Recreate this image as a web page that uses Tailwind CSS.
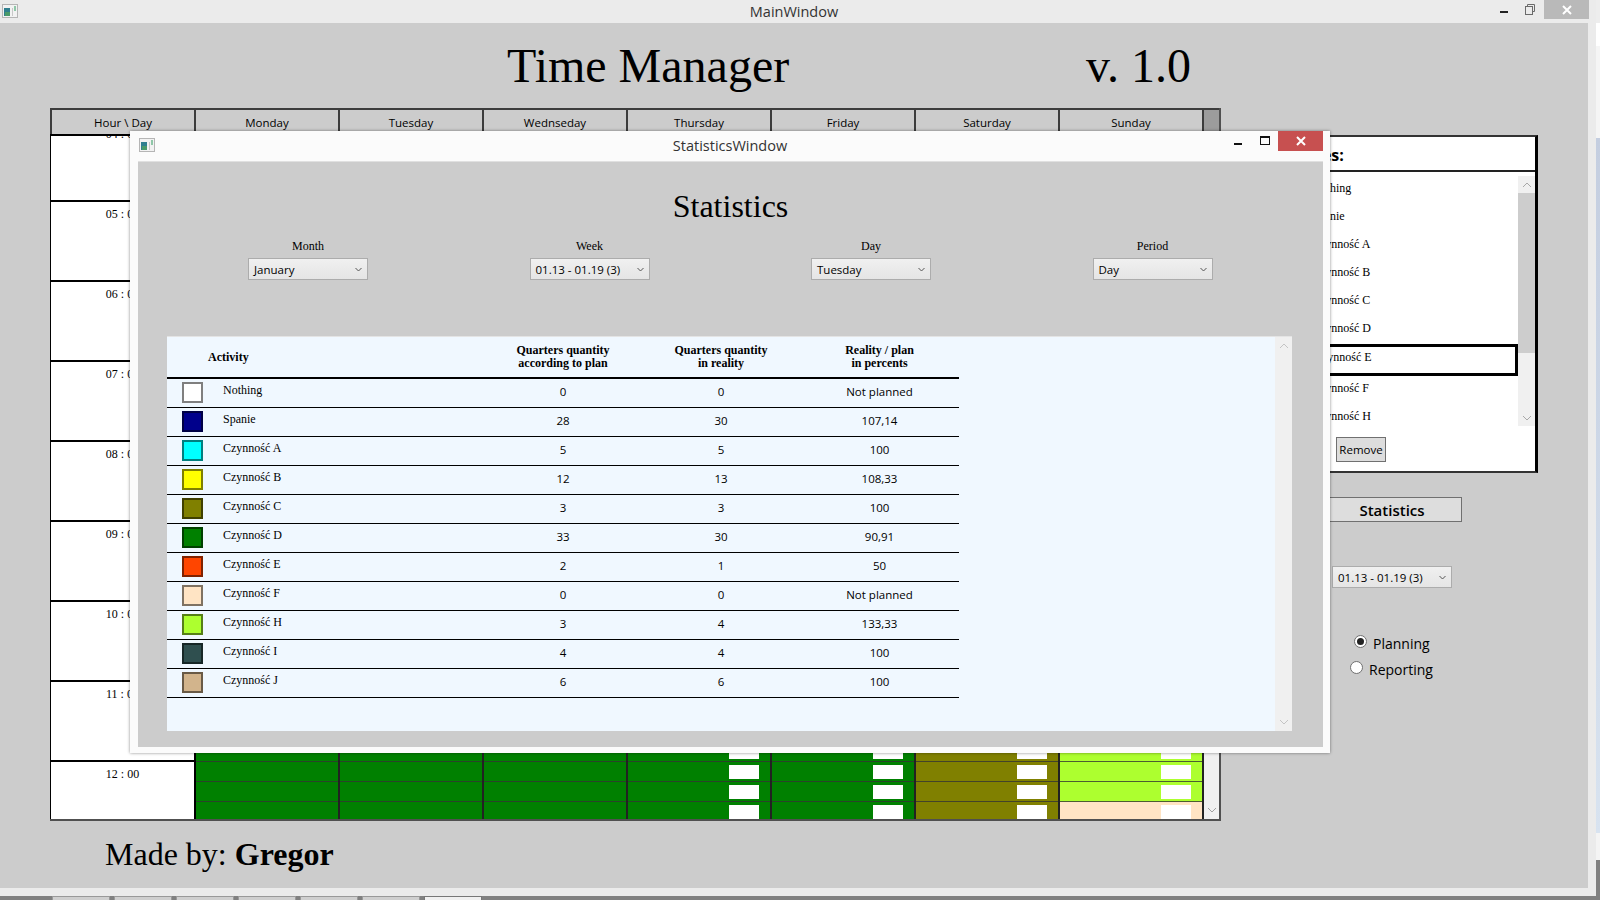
<!DOCTYPE html>
<html lang="en">
<head>
  <meta charset="UTF-8" />
  <title>Time Manager</title>
  <script src="https://cdn.jsdelivr.net/npm/@tailwindcss/browser@4"></script>
</head>
<body class="relative w-[1600px] h-[900px] overflow-hidden bg-[#808080] font-['Open_Sans',sans-serif] text-black">

  <!-- strip of the desktop behind the main window -->
  <div class="absolute right-0 top-0 w-[4px] h-[860px] flex flex-col">
    <div class="h-[23px] bg-[#ededed]"></div>
    <div class="h-[23px] bg-white"></div>
    <div class="h-[92px] bg-[#f5f5f5]"></div>
    <div class="h-[695px] bg-gradient-to-b from-[#c4cee0] to-[#d8e3f0]"></div>
    <div class="h-[27px] bg-[#f4f4f4]"></div>
  </div>
  <!-- taskbar previews -->
  <div class="absolute left-[52px] top-[896px] flex gap-[4px]">
    <div class="w-[58px] h-[4px] bg-[#cfcfcf] border border-b-0 border-[#999]"></div>
    <div class="w-[58px] h-[4px] bg-[#cfcfcf] border border-b-0 border-[#999]"></div>
    <div class="w-[58px] h-[4px] bg-[#cfcfcf] border border-b-0 border-[#999]"></div>
    <div class="w-[58px] h-[4px] bg-[#cfcfcf] border border-b-0 border-[#999]"></div>
    <div class="w-[58px] h-[4px] bg-[#cfcfcf] border border-b-0 border-[#999]"></div>
    <div class="w-[58px] h-[4px] bg-[#cfcfcf] border border-b-0 border-[#999]"></div>
    <div class="w-[58px] h-[4px] bg-[#f0f0f0] border border-b-0 border-[#777]"></div>
  </div>

  <!-- MAIN WINDOW -->
  <div class="absolute left-0 top-0 w-[1596px] h-[896px] bg-[#ebebeb] flex flex-col">
    <div class="relative h-[23px] shrink-0 flex items-center justify-center text-[14.5px] text-[#333]">
      <svg class="absolute left-[2px] top-[3px]" width="16" height="16" viewBox="0 0 16 16">
        <rect x="0.5" y="1.5" width="15" height="13" fill="#f2f2f2" stroke="#b5b5b5"/>
        <rect x="2" y="5" width="6" height="8" fill="#2f7f8f"/>
        <rect x="3" y="9" width="5" height="4" fill="#4a9a6a"/>
        <rect x="10" y="5" width="1" height="8" fill="#c8c8c8"/>
        <rect x="12" y="3" width="2" height="5" fill="#8fc7a8"/>
      </svg>
      <span class="ml-[-8px]">MainWindow</span>
      <div class="absolute left-[1500px] top-[11px] w-[8px] h-[2px] bg-[#222]"></div>
      <svg class="absolute left-[1524px] top-[4px]" width="11" height="11" viewBox="0 0 11 11" fill="none" stroke="#6a6a6a">
        <path d="M3.5 2.5V.5h7v7h-2"/><rect x="1.5" y="2.5" width="7" height="8"/>
      </svg>
      <div class="absolute left-[1544px] top-0 w-[45px] h-[19px] bg-[#b9b9b9] flex items-center justify-center">
        <svg width="10" height="10" viewBox="0 0 10 10" stroke="#fff" stroke-width="2"><path d="M1 1l8 8M9 1l-8 8"/></svg>
      </div>
    </div>

    <div class="relative w-[1588px] h-[865px] bg-[#cccccc]">
      <div class="absolute left-[507px] top-[16px] text-[48px] leading-[54px] font-['Liberation_Serif',serif]">Time Manager</div>
      <div class="absolute left-[1086px] top-[16px] text-[48px] leading-[54px] font-['Liberation_Serif',serif]">v. 1.0</div>

      <!-- weekly timetable -->
      <div class="absolute left-[50px] top-[85px] w-[1171px] h-[713px] flex flex-col border-b-2 border-r-2 border-[#505050]">
        <div class="flex h-[28px] shrink-0 border-b-2 border-black text-[11.5px] leading-[16px]">
          <div class="w-[146px] pt-[5px] text-center border-t-2 border-x-2 border-[#3c3c3c]">Hour \ Day</div>
          <div class="w-[144px] pt-[5px] text-center border-t-2 border-r-2 border-[#3c3c3c]">Monday</div>
          <div class="w-[144px] pt-[5px] text-center border-t-2 border-r-2 border-[#3c3c3c]">Tuesday</div>
          <div class="w-[144px] pt-[5px] text-center border-t-2 border-r-2 border-[#3c3c3c]">Wednseday</div>
          <div class="w-[144px] pt-[5px] text-center border-t-2 border-r-2 border-[#3c3c3c]">Thursday</div>
          <div class="w-[144px] pt-[5px] text-center border-t-2 border-r-2 border-[#3c3c3c]">Friday</div>
          <div class="w-[144px] pt-[5px] text-center border-t-2 border-r-2 border-[#3c3c3c]">Saturday</div>
          <div class="w-[144px] pt-[5px] text-center border-t-2 border-r-2 border-[#3c3c3c]">Sunday</div>
          <div class="flex-1 bg-[#9c9c9c] border-t-2 border-[#3c3c3c]"></div>
        </div>
        <div class="relative flex-1 overflow-hidden flex">
          <div id="rows" class="w-[1154px] mt-[-14px] font-['Liberation_Serif',serif] text-[12px] leading-[14px]"></div>
          <div class="flex-1 bg-[#f0f0f0] flex items-end justify-center pb-[6px]">
            <svg width="10" height="6" viewBox="0 0 10 6" fill="none" stroke="#a0a0a0"><path d="M1 1l4 4 4-4"/></svg>
          </div>
        </div>
      </div>

      <div class="absolute left-[105px] top-[813px] text-[32px] leading-[36px] font-['Liberation_Serif',serif]">Made by: <b>Gregor</b></div>

      <!-- activities panel -->
      <div class="absolute left-[1180px] top-[112px] w-[358px] h-[338px] bg-white border-t-2 border-b-2 border-[#333] border-r-[3px] border-r-black flex flex-col">
        <div class="h-[35px] shrink-0 border-b-2 border-[#222] pl-[85px] pt-[7px] text-[16px] leading-[22px] font-bold">Activities:</div>
        <div class="flex flex-1">
          <div class="w-[338px] pt-[4px] font-['Liberation_Serif',serif] text-[12px] leading-[14px]">
            <div class="h-[28px] pl-[132px] pt-[5px]">Nothing</div>
            <div class="h-[28px] pl-[132px] pt-[5px]">Spanie</div>
            <div class="h-[28px] pl-[132px] pt-[5px]">Czynność A</div>
            <div class="h-[28px] pl-[132px] pt-[5px]">Czynność B</div>
            <div class="h-[28px] pl-[132px] pt-[5px]">Czynność C</div>
            <div class="h-[28px] pl-[132px] pt-[5px]">Czynność D</div>
            <div class="h-[32px] pl-[130px] pt-[3px] border-[3px] border-black ml-[1px]">Czynność E</div>
            <div class="h-[28px] pl-[132px] pt-[5px]">Czynność F</div>
            <div class="h-[28px] pl-[132px] pt-[5px]">Czynność H</div>
            <div class="flex justify-end pr-[132px] pt-[5px]">
              <button class="w-[50px] h-[25px] bg-[#dddddd] border border-[#707070] font-['Open_Sans',sans-serif] text-[11.5px]">Remove</button>
            </div>
          </div>
          <div class="w-[17px] h-[250px] mt-[4px] flex flex-col bg-[#f0f0f0]">
            <div class="h-[17px] flex items-center justify-center">
              <svg width="10" height="6" viewBox="0 0 10 6" fill="none" stroke="#a8a8a8"><path d="M1 5l4-4 4 4"/></svg>
            </div>
            <div class="h-[160px] bg-[#cdcdcd]"></div>
            <div class="flex-1 flex items-end justify-center pb-[5px]">
              <svg width="10" height="6" viewBox="0 0 10 6" fill="none" stroke="#a8a8a8"><path d="M1 1l4 4 4-4"/></svg>
            </div>
          </div>
        </div>
      </div>

      <button class="absolute left-[1322px] top-[474px] w-[140px] h-[25px] pt-[1px] bg-[#dddddd] border border-[#707070] text-[15px] font-semibold">Statistics</button>

      <div class="absolute left-[1332px] top-[543px] w-[120px] h-[22px] pt-[1px] flex items-center justify-between pl-[5px] pr-[5px] bg-gradient-to-b from-[#f0f0f0] to-[#e5e5e5] border border-[#acacac] text-[11.5px]">
        <span>01.13 - 01.19 (3)</span>
        <svg width="7" height="5" viewBox="0 0 7 5" fill="none" stroke="#555"><path d="M.5 1l3 3 3-3"/></svg>
      </div>

      <label class="absolute left-[1354px] top-[611px] flex items-center gap-[6px] text-[14px] leading-[20px]">
        <span class="w-[13px] h-[13px] mt-[-5px] rounded-full bg-white border border-[#707070] flex items-center justify-center"><span class="w-[7px] h-[7px] rounded-full bg-[#222]"></span></span>
        Planning
      </label>
      <label class="absolute left-[1350px] top-[637px] flex items-center gap-[6px] text-[14px] leading-[20px]">
        <span class="w-[13px] h-[13px] mt-[-5px] rounded-full bg-white border border-[#707070]"></span>
        Reporting
      </label>
    </div>
  </div>

  <!-- STATISTICS WINDOW -->
  <div class="absolute left-[130px] top-[131px] w-[1200px] h-[622px] bg-[#fbfbfb] shadow-[0_0_3px_rgba(0,0,0,0.45)] flex flex-col">
    <div class="relative h-[30px] shrink-0 flex items-center justify-center text-[14.5px] text-[#333]">
      <svg class="absolute left-[9px] top-[6px]" width="16" height="16" viewBox="0 0 16 16">
        <rect x="0.5" y="1.5" width="15" height="13" fill="#f2f2f2" stroke="#b5b5b5"/>
        <rect x="2" y="5" width="6" height="8" fill="#2f7f8f"/>
        <rect x="3" y="9" width="5" height="4" fill="#4a9a6a"/>
        <rect x="10" y="5" width="1" height="8" fill="#c8c8c8"/>
        <rect x="12" y="3" width="2" height="5" fill="#8fc7a8"/>
      </svg>
      <span>StatisticsWindow</span>
      <div class="absolute left-[1104px] top-[12px] w-[8px] h-[2px] bg-[#111]"></div>
      <div class="absolute left-[1130px] top-[5px] w-[10px] h-[9px] border border-t-2 border-[#111]"></div>
      <div class="absolute left-[1148px] top-0 w-[45px] h-[20px] bg-[#c75050] flex items-center justify-center">
        <svg width="10" height="10" viewBox="0 0 10 10" stroke="#fff" stroke-width="2"><path d="M1 1l8 8M9 1l-8 8"/></svg>
      </div>
    </div>

    <div class="ml-[8px] mr-[7px] h-[586px] bg-[#cccccc] flex flex-col border-t border-[#e0e0e0]">
      <h1 class="mt-[26px] h-[36px] text-center text-[32px] leading-[36px] font-['Liberation_Serif',serif]">Statistics</h1>

      <div class="mt-[15px] ml-[110px] flex gap-[161.5px]">
        <div class="w-[120px] text-center">
          <div class="text-[12px] leading-[14px] h-[19px] font-['Liberation_Serif',serif]">Month</div>
          <div class="h-[22px] pt-[1px] flex items-center justify-between px-[5px] bg-gradient-to-b from-[#f0f0f0] to-[#e5e5e5] border border-[#acacac] text-[11.5px]">
            <span>January</span><svg width="7" height="5" viewBox="0 0 7 5" fill="none" stroke="#555"><path d="M.5 1l3 3 3-3"/></svg>
          </div>
        </div>
        <div class="w-[120px] text-center">
          <div class="text-[12px] leading-[14px] h-[19px] font-['Liberation_Serif',serif]">Week</div>
          <div class="h-[22px] pt-[1px] flex items-center justify-between px-[5px] bg-gradient-to-b from-[#f0f0f0] to-[#e5e5e5] border border-[#acacac] text-[11.5px]">
            <span>01.13 - 01.19 (3)</span><svg width="7" height="5" viewBox="0 0 7 5" fill="none" stroke="#555"><path d="M.5 1l3 3 3-3"/></svg>
          </div>
        </div>
        <div class="w-[120px] text-center">
          <div class="text-[12px] leading-[14px] h-[19px] font-['Liberation_Serif',serif]">Day</div>
          <div class="h-[22px] pt-[1px] flex items-center justify-between px-[5px] bg-gradient-to-b from-[#f0f0f0] to-[#e5e5e5] border border-[#acacac] text-[11.5px]">
            <span>Tuesday</span><svg width="7" height="5" viewBox="0 0 7 5" fill="none" stroke="#555"><path d="M.5 1l3 3 3-3"/></svg>
          </div>
        </div>
        <div class="w-[120px] text-center">
          <div class="text-[12px] leading-[14px] h-[19px] font-['Liberation_Serif',serif]">Period</div>
          <div class="h-[22px] pt-[1px] flex items-center justify-between px-[5px] bg-gradient-to-b from-[#f0f0f0] to-[#e5e5e5] border border-[#acacac] text-[11.5px]">
            <span>Day</span><svg width="7" height="5" viewBox="0 0 7 5" fill="none" stroke="#555"><path d="M.5 1l3 3 3-3"/></svg>
          </div>
        </div>
      </div>

      <!-- results table -->
      <div class="mt-[56px] ml-[29px] w-[1125px] h-[395px] flex bg-[#f0f8ff] border-t border-[#e4e4e4]">
        <div class="w-[1108px]">
          <div class="w-[792px] h-[42px] flex items-center border-b-2 border-black font-['Liberation_Serif',serif] font-bold text-[12px] leading-[13px]">
            <div class="w-[317px] pl-[41px] pt-[1px]">Activity</div>
            <div class="w-[158px] text-center">Quarters quantity<br>according to plan</div>
            <div class="w-[158px] text-center">Quarters quantity<br>in reality</div>
            <div class="w-[159px] text-center">Reality / plan<br>in percents</div>
          </div>
          <div id="stats" class="w-[792px]"></div>
        </div>
        <div class="w-[17px] bg-[#f0f0f0] flex flex-col justify-between items-center py-[6px]">
          <svg width="10" height="6" viewBox="0 0 10 6" fill="none" stroke="#c4c4c4"><path d="M1 5l4-4 4 4"/></svg>
          <svg width="10" height="6" viewBox="0 0 10 6" fill="none" stroke="#c4c4c4"><path d="M1 1l4 4 4-4"/></svg>
        </div>
      </div>
    </div>
  </div>

  <script>
    const hourRows = ['04 : 00', '05 : 00', '06 : 00', '07 : 00', '08 : 00', '09 : 00', '10 : 00', '11 : 00', '12 : 00'];
    const GREEN = '#008000', OLIVE = '#808000', LIME = '#adff2f', BISQUE = '#ffe4c4';
    // quarter colours for the two rows that show below the dialog
    const dayColours = [GREEN, GREEN, GREEN, GREEN, GREEN, OLIVE, LIME];

    const cell = (colour, box) => `
      <div class="relative h-[20px] border-b border-[#333]/80" style="background:${colour}">
        ${box ? '<div class="absolute right-[11px] top-[3px] w-[30px] h-[14px] bg-white"></div>' : ''}
      </div>`;

    document.getElementById('rows').innerHTML = hourRows.map((hour, i) => {
      const days = dayColours.map((c, d) => {
        const boxed = d >= 3;
        let quarters = '';
        for (let q = 0; q < 4; q++) {
          let colour = c;
          if (d === 6 && i === 8 && q === 2) colour = BISQUE;
          quarters += (i >= 7) ? cell(colour, boxed) : '';
        }
        return `<div class="w-[144px] h-[80px] border-r-2 border-[#222]">${quarters}</div>`;
      }).join('');
      return `
        <div class="flex h-[80px]">
          <div class="w-[146px] h-[80px] bg-white border-l border-black border-r-2 border-r-black border-b-2 border-b-black text-center pt-[5px]">${hour}</div>
          ${days}
        </div>`;
    }).join('');

    const stats = [
      ['Nothing', '#ffffff', 0, 0, 'Not planned'],
      ['Spanie', '#00008b', 28, 30, '107,14'],
      ['Czynność A', '#00ffff', 5, 5, '100'],
      ['Czynność B', '#ffff00', 12, 13, '108,33'],
      ['Czynność C', '#808000', 3, 3, '100'],
      ['Czynność D', '#008000', 33, 30, '90,91'],
      ['Czynność E', '#ff4500', 2, 1, '50'],
      ['Czynność F', '#ffe4c4', 0, 0, 'Not planned'],
      ['Czynność H', '#adff2f', 3, 4, '133,33'],
      ['Czynność I', '#2f4f4f', 4, 4, '100'],
      ['Czynność J', '#d2b48c', 6, 6, '100'],
    ];
    document.getElementById('stats').innerHTML = stats.map(([name, colour, plan, real, pct]) => `
      <div class="flex h-[29px] border-b border-black text-[11.5px]">
        <div class="w-[317px] flex pl-[15px] pt-[3px]">
          <div class="w-[21px] h-[21px] border-2 border-black/50" style="background:${colour}"></div>
          <div class="ml-[20px] font-['Liberation_Serif',serif] text-[12px] leading-[14px] pt-[1px]">${name}</div>
        </div>
        <div class="w-[158px] text-center leading-[16px] pt-[5px]">${plan}</div>
        <div class="w-[158px] text-center leading-[16px] pt-[5px]">${real}</div>
        <div class="w-[159px] text-center leading-[16px] pt-[5px]">${pct}</div>
      </div>`).join('');
  </script>
</body>
</html>
